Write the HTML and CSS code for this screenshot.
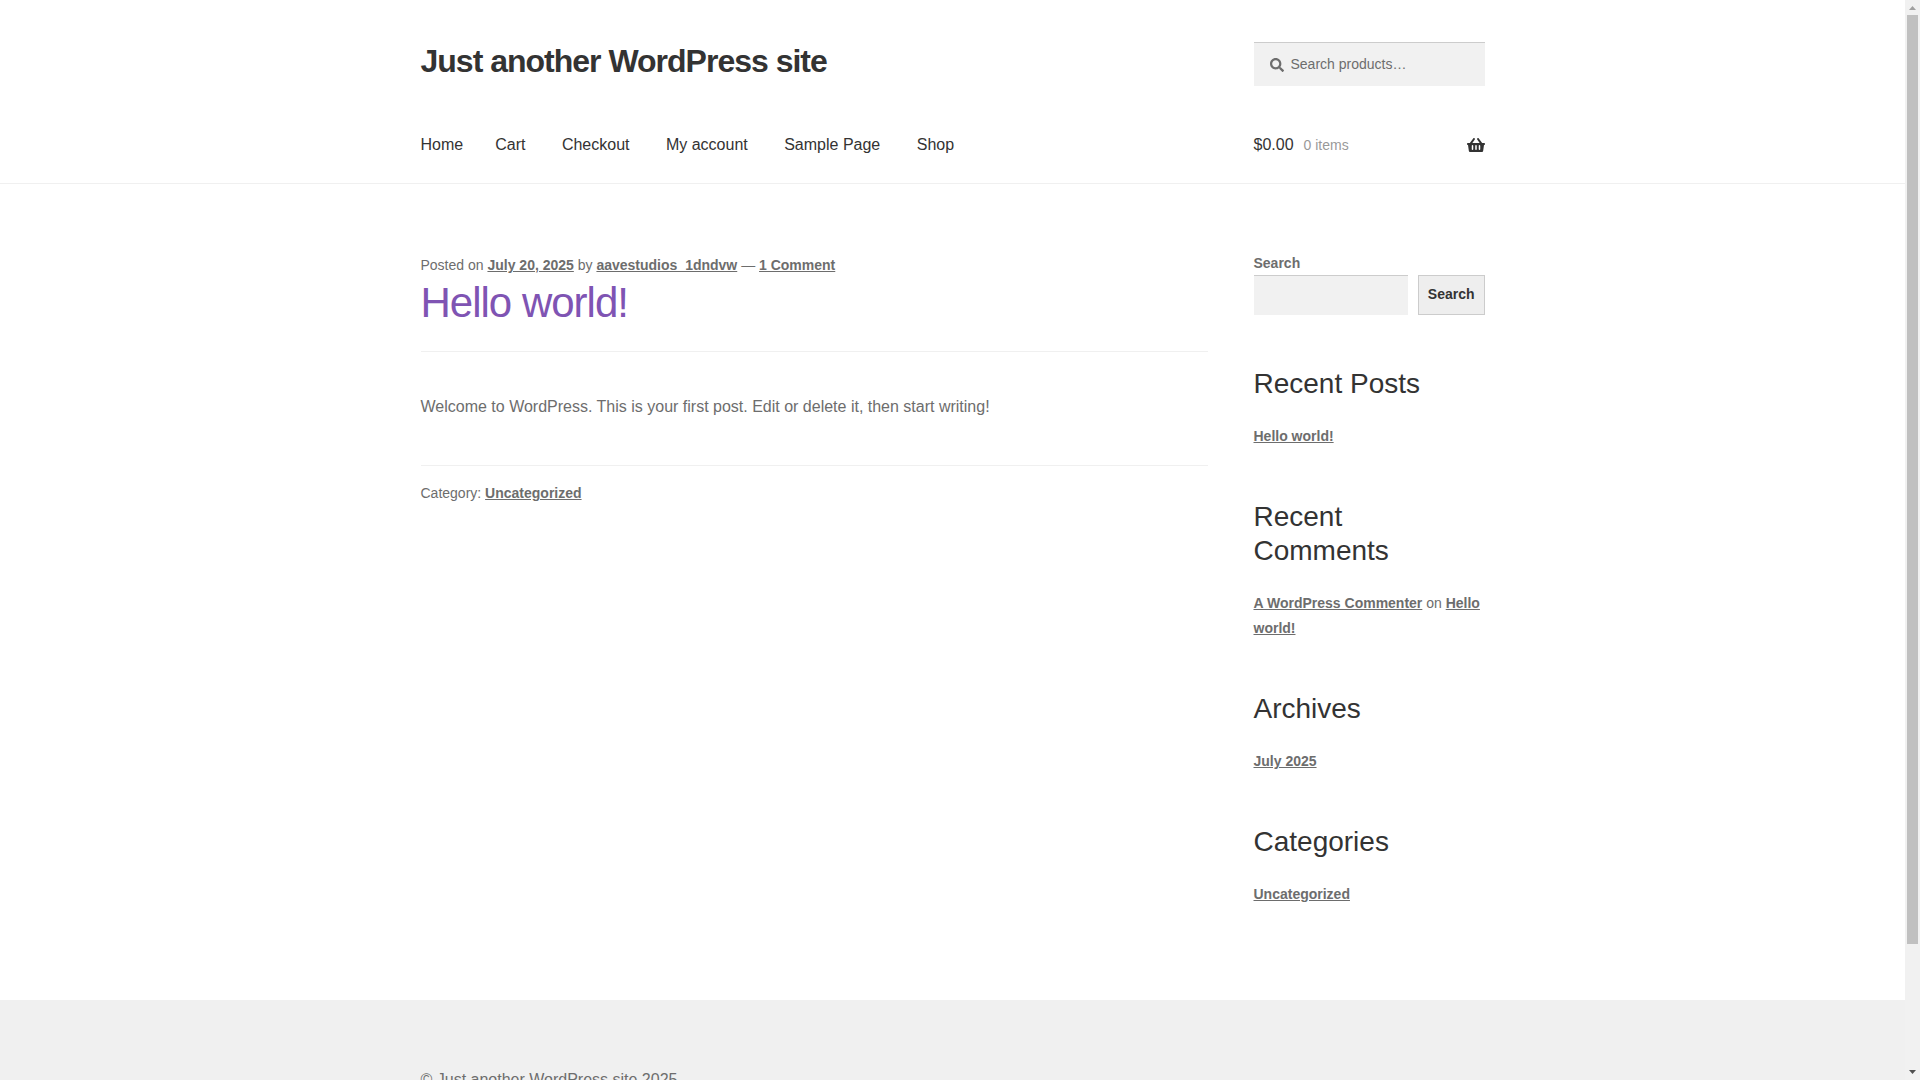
FILE: index.html
```html
<!DOCTYPE html>
<html lang="en">
<head>
  <meta charset="UTF-8">
  <meta name="viewport" content="width=device-width, initial-scale=1.0">
  <title>Just another WordPress site</title>
  <link rel="stylesheet" href="styles.css">
</head>
<body>

  <div class="page">
    <header class="site-header">
      <div class="container header-top">
        <a class="site-title" href="#">Just another WordPress site</a>
        <form class="product-search" role="search">
          <svg class="search-icon" viewBox="0 0 512 512" aria-hidden="true"><path d="M505 442.7L405.3 343c-4.5-4.5-10.6-7-17-7H372c27.6-35.3 44-79.7 44-128C416 93.1 322.9 0 208 0S0 93.1 0 208s93.1 208 208 208c48.3 0 92.7-16.4 128-44v16.3c0 6.4 2.5 12.5 7 17l99.7 99.7c9.4 9.4 24.6 9.4 33.9 0l28.3-28.3c9.4-9.4 9.4-24.6.1-34zM208 336c-70.7 0-128-57.2-128-128 0-70.7 57.2-128 128-128 70.7 0 128 57.2 128 128 0 70.7-57.2 128-128 128z"/></svg>
          <input type="search" placeholder="Search products…" aria-label="Search products">
        </form>
      </div>

      <div class="container header-nav">
        <nav class="main-nav">
          <a href="#">Home</a>
          <ul>
            <li><a href="#">Cart</a></li>
            <li><a href="#">Checkout</a></li>
            <li><a href="#">My account</a></li>
            <li><a href="#">Sample Page</a></li>
            <li><a href="#">Shop</a></li>
          </ul>
        </nav>
        <a class="cart-link" href="#">
          <span>$0.00</span>
          <span class="count">0 items</span>
          <svg class="basket-icon" viewBox="0 0 576 512" aria-hidden="true"><path d="M576 216v16c0 13.255-10.745 24-24 24h-8l-26.113 182.788C514.509 462.435 494.257 480 470.37 480H105.63c-23.887 0-44.139-17.565-47.518-41.212L32 256h-8c-13.255 0-24-10.745-24-24v-16c0-13.255 10.745-24 24-24h67.341l106.78-146.821c10.395-14.292 30.407-17.453 44.701-7.058 14.293 10.395 17.453 30.408 7.058 44.701L170.477 192h235.046L326.12 82.821c-10.395-14.292-7.234-34.306 7.059-44.701 14.291-10.395 34.306-7.235 44.701 7.058L484.659 192H552c13.255 0 24 10.745 24 24zM312 392V280c0-13.255-10.745-24-24-24s-24 10.745-24 24v112c0 13.255 10.745 24 24 24s24-10.745 24-24zm112 0V280c0-13.255-10.745-24-24-24s-24 10.745-24 24v112c0 13.255 10.745 24 24 24s24-10.745 24-24zm-224 0V280c0-13.255-10.745-24-24-24s-24 10.745-24 24v112c0 13.255 10.745 24 24 24s24-10.745 24-24z"/></svg>
        </a>
      </div>
    </header>

    <div class="container content">
      <main class="post">
        <header class="post-header">
          <p class="meta">Posted on <a href="#">July 20, 2025</a> by <a href="#">aavestudios_1dndvw</a> — <a href="#">1 Comment</a></p>
          <h2><a href="#">Hello world!</a></h2>
        </header>
        <p class="post-body">Welcome to WordPress. This is your first post. Edit or delete it, then start writing!</p>
        <p class="meta post-category">Category: <a href="#">Uncategorized</a></p>
      </main>

      <aside class="sidebar">
        <form class="widget search-widget">
          <label for="site-search">Search</label>
          <div class="search-row">
            <input type="search" id="site-search">
            <button type="submit">Search</button>
          </div>
        </form>
        <section class="widget">
          <h2>Recent Posts</h2>
          <p><a href="#">Hello world!</a></p>
        </section>
        <section class="widget">
          <h2>Recent Comments</h2>
          <p><a href="#">A WordPress Commenter</a> on <a href="#">Hello world!</a></p>
        </section>
        <section class="widget">
          <h2>Archives</h2>
          <p><a href="#">July 2025</a></p>
        </section>
        <section class="widget">
          <h2>Categories</h2>
          <p><a href="#">Uncategorized</a></p>
        </section>
      </aside>
    </div>

    <footer class="site-footer">
      <div class="container">
        <p>© Just another WordPress site 2025</p>
      </div>
    </footer>
  </div>

  <div class="scrollbar" aria-hidden="true">
    <svg class="arrow" viewBox="0 0 15 15"><path d="M4 10L7.500 6L11 10z"/></svg>
    <div class="track">
      <div class="thumb"></div>
    </div>
    <svg class="arrow arrow-down" viewBox="0 0 15 15"><path d="M4 5L7.500 9L11 5z"/></svg>
  </div>

</body>
</html>
```
FILE: styles.css
```css
* {
  box-sizing: border-box;
}

body {
  display: grid;
  grid-template-columns: minmax(0, 1fr) 15px;
  height: 100vh;
  margin: 0;
  overflow: hidden;
  font-family: "Liberation Sans", Arial, sans-serif;
  font-size: 16px;
  line-height: 26px;
  color: #6d6d6d;
  background-color: #fff;
}

h2, p, ul {
  margin: 0;
  padding: 0;
  font-weight: normal;
}

a {
  color: inherit;
}

input, button {
  font-family: inherit;
  font-size: 14px;
  border-radius: 0;
}

/* The page scrolls inside the window */
.page {
  height: 100vh;
  overflow-y: auto;
  scrollbar-width: none;
}

.container {
  max-width: 1064px;
  margin: 0 auto;
}

/* Header */
.site-header {
  padding-top: 42px;
  border-bottom: 1px solid #f0f0f0;
  color: #333;
}

.site-header a {
  text-decoration: none;
}

.header-top,
.header-nav,
.content {
  display: grid;
  grid-template-columns: minmax(0, 1fr) 231px;
  column-gap: 46px;
}

.site-title {
  font-size: 32px;
  font-weight: bold;
  line-height: 38px;
  letter-spacing: -1px;
}

.product-search {
  display: flex;
  align-items: center;
  gap: 7px;
  height: 44px;
  padding: 0 16px;
  background-color: #f1f1f1;
  border-top: 1px solid #ccc;
  color: #6d6d6d;
}

.product-search input {
  flex: 1;
  min-width: 0;
  padding: 0 0 2px;
  border: none;
  background: none;
}

.product-search input::placeholder {
  color: #6d6d6d;
}

.search-icon {
  width: 14px;
  height: 14px;
  fill: #6d6d6d;
}

.header-nav {
  margin-top: 46px;
  padding-bottom: 25px;
}

.main-nav {
  display: flex;
  gap: 32px;
}

.main-nav ul {
  list-style: none;
}

.main-nav li {
  display: inline-block;
  margin-right: 32px;
}

.main-nav li:last-child {
  margin-right: 0;
}

.cart-link {
  display: flex;
  align-items: center;
  gap: 10px;
}

.count {
  font-size: 14px;
  opacity: 0.5;
}

.basket-icon {
  width: 18px;
  height: 16px;
  margin-left: auto;
  fill: #333;
}

/* Post */
.content {
  padding-top: 68px;
  padding-bottom: 42px;
}

.meta {
  font-size: 14px;
}

.meta a,
.widget a {
  font-weight: bold;
}

.post-header {
  padding-bottom: 23px;
  border-bottom: 1px solid #f0f0f0;
}

.post-header h2 {
  font-size: 42px;
  line-height: 50px;
  letter-spacing: -1px;
}

.post-header h2 a {
  color: #7f54b3;
  text-decoration: none;
}

.post-body {
  padding: 42px 0 45px;
  border-bottom: 1px solid #f0f0f0;
}

.post-category {
  padding-top: 14px;
}

/* Sidebar */
.widget {
  margin-bottom: 51px;
  font-size: 14px;
  line-height: 25px;
}

.widget h2 {
  margin-bottom: 23px;
  font-size: 28px;
  line-height: 34px;
  color: #333;
}

.search-widget {
  margin-bottom: 52px;
}

.search-widget label {
  display: block;
  font-weight: bold;
  line-height: 23px;
}

.search-row {
  display: flex;
  gap: 10px;
  height: 40px;
}

.search-row input {
  flex: 1;
  min-width: 0;
  padding: 0 8px;
  border: none;
  border-top: 1px solid #ccc;
  background-color: #f1f1f1;
}

.search-row button {
  padding: 0 9px 2px;
  border: 1px solid #ccc;
  background-color: #eee;
  color: #333;
  font-weight: bold;
}

/* Footer */
.site-footer {
  padding: 67px 0 126px;
  background-color: #f0f0f0;
}

/* Scrollbar */
.scrollbar {
  display: flex;
  flex-direction: column;
  height: 100vh;
  background-color: #f1f1f1;
}

.arrow {
  width: 15px;
  height: 15px;
  fill: #a0a0a0;
}

.arrow-down {
  fill: #505050;
}

.track {
  flex: 1;
  padding: 0 2px;
}

.thumb {
  height: 88.5%;
  background-color: #c0c0c0;
}
```
